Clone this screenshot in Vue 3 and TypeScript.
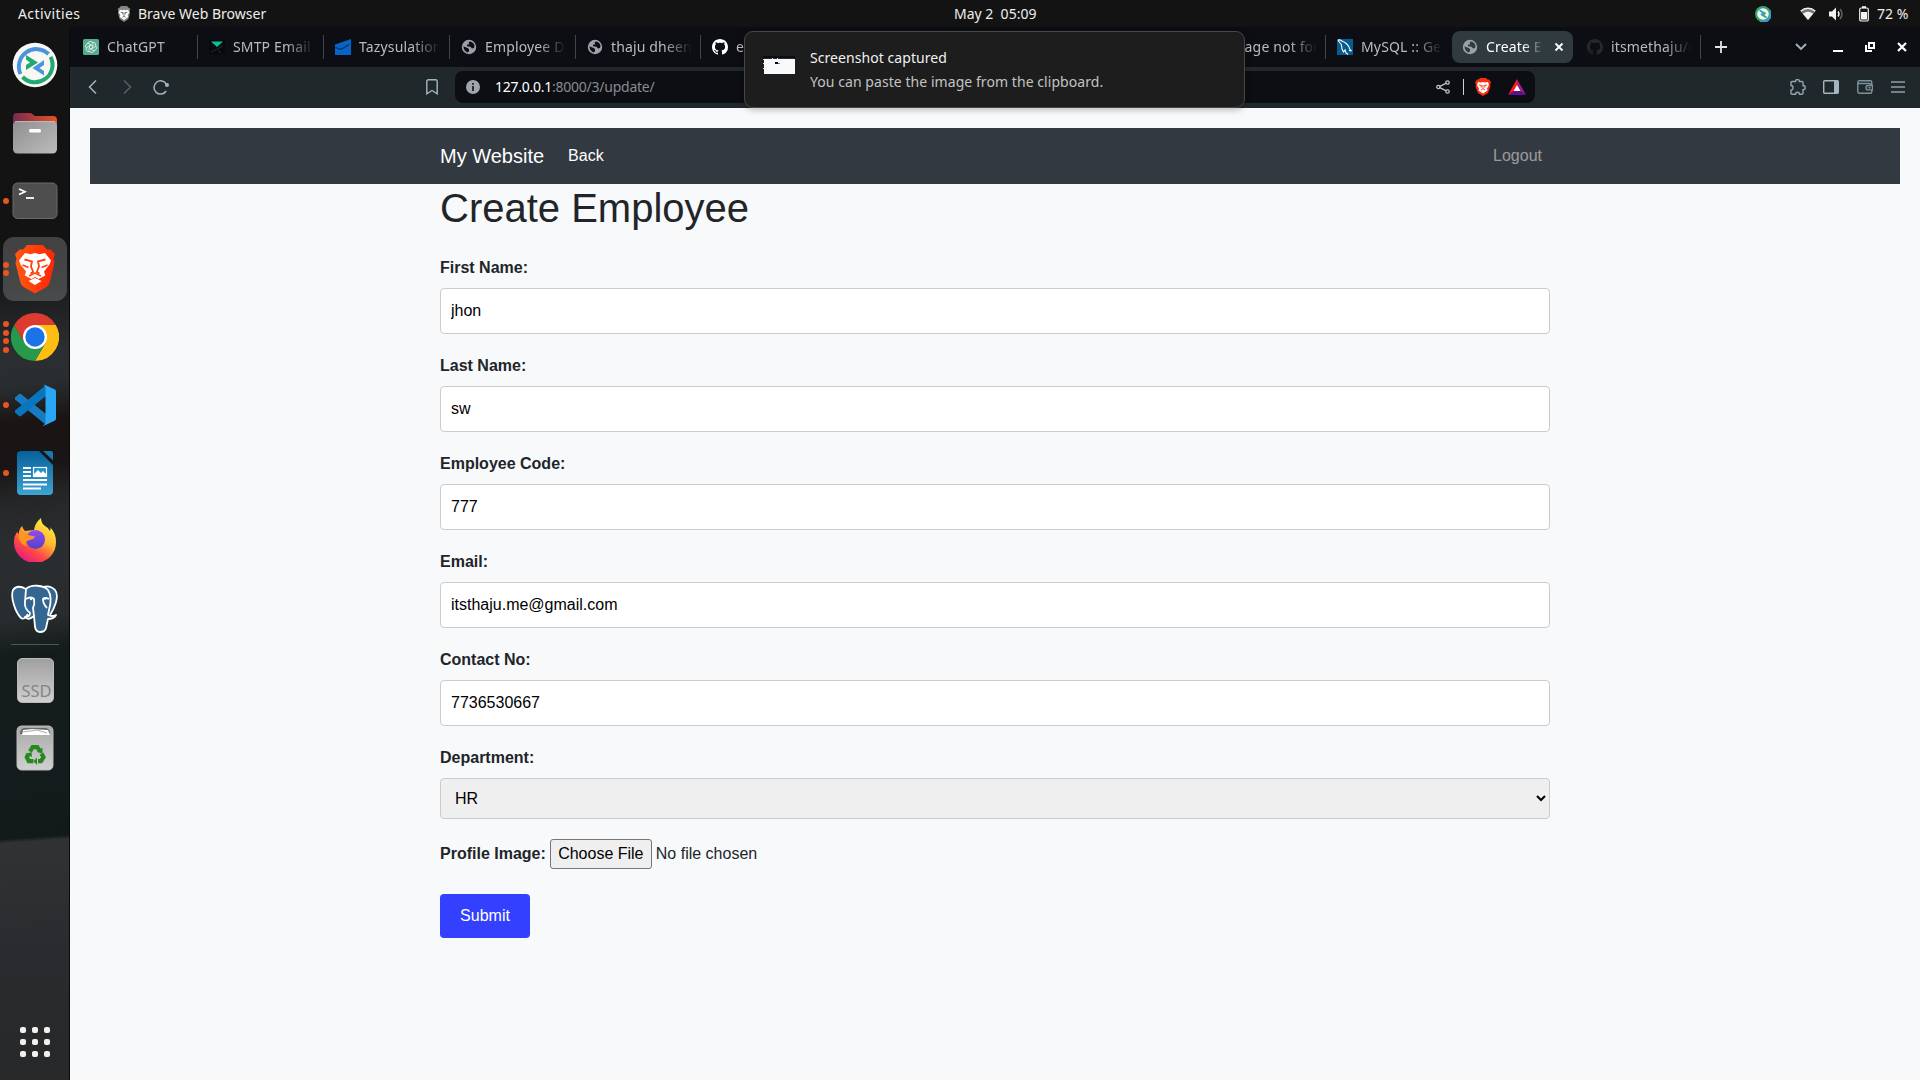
<script setup lang="ts">
import { ref } from 'vue'

interface Tab {
  icon: string
  title: string
  active?: boolean
  divider?: boolean
  wide?: boolean
}

interface Field {
  id: string
  label: string
  value: string
}

const tabs: Tab[] = [
  { icon: 'gpt', title: 'ChatGPT', divider: true, wide: true },
  { icon: 'smtp', title: 'SMTP Email', divider: true, wide: true },
  { icon: 'tazy', title: 'Tazysulation', divider: true, wide: true },
  { icon: 'globe', title: 'Employee D', divider: true, wide: true },
  { icon: 'globe', title: 'thaju dheen', divider: true },
  { icon: 'github', title: 'e', divider: true },
  { icon: '', title: '' },
  { icon: '', title: '' },
  { icon: '', title: '' },
  { icon: '', title: 'Page not fou', divider: true },
  { icon: 'mysql', title: 'MySQL :: Ge', wide: true },
  { icon: 'globe', title: 'Create E', active: true },
  { icon: 'githubdim', title: 'itsmethaju/d', divider: true },
]

const fields = ref<Field[]>([
  { id: 'first', label: 'First Name:', value: 'jhon' },
  { id: 'last', label: 'Last Name:', value: 'sw' },
  { id: 'code', label: 'Employee Code:', value: '777' },
  { id: 'email', label: 'Email:', value: 'itsthaju.me@gmail.com' },
  { id: 'contact', label: 'Contact No:', value: '7736530667' },
])

const dock: { name: string; dots: number; active?: boolean }[] = [
  { name: 'remote', dots: 0 },
  { name: 'files', dots: 0 },
  { name: 'terminal', dots: 1 },
  { name: 'brave', dots: 2, active: true },
  { name: 'chrome', dots: 4 },
  { name: 'code', dots: 1 },
  { name: 'writer', dots: 1 },
  { name: 'firefox', dots: 0 },
  { name: 'postgres', dots: 0 },
]

const petals = [0, 60, 120, 180, 240, 300]
const githubPath =
  'M8 0C3.58 0 0 3.58 0 8c0 3.54 2.29 6.53 5.47 7.59.4.07.55-.17.55-.38 0-.19-.01-.82-.01-1.49-2.01.37-2.53-.49-2.69-.94-.09-.23-.48-.94-.82-1.13-.28-.15-.68-.52-.01-.53.63-.01 1.08.58 1.23.82.72 1.21 1.87.87 2.33.66.07-.52.28-.87.51-1.07-1.78-.2-3.64-.89-3.64-3.95 0-.87.31-1.59.82-2.15-.08-.2-.36-1.02.08-2.12 0 0 .67-.21 2.2.82.64-.18 1.32-.27 2-.27s1.36.09 2 .27c1.53-1.04 2.2-.82 2.2-.82.44 1.1.16 1.92.08 2.12.51.56.82 1.27.82 2.15 0 3.07-1.87 3.75-3.65 3.95.29.25.54.73.54 1.48 0 1.07-.01 1.93-.01 2.2 0 .21.15.46.55.38A8.01 8.01 0 0 0 16 8c0-4.42-3.58-8-8-8z'
</script>

<template>
  <div class="desktop">
    <header class="topbar">
      <div class="top-left">
        <span class="activities">Activities</span>
        <svg class="top-brave" width="14" height="16" viewBox="0 0 40 48">
          <path d="M11 0h18l5 5 5 3-2 8 1 6-5 17-13 9-13-9L2 22l1-6L1 8l5-3z" fill="#858585" />
          <path d="M8 11l8 2 4-2 4 2 8-2 4 8-5 9 2 5-6 4-7 5-7-5-6-4 2-5-5-9z" fill="#fff" />
          <path d="M10 19l7 1-1 5M30 19l-7 1 1 5M20 20v11l-5 3M20 31l5 3" fill="none" stroke="#777" stroke-width="3" />
        </svg>
        <span class="app-name">Brave Web Browser</span>
      </div>
      <span class="clock">May 2&nbsp; 05:09</span>
      <div class="tray">
        <svg class="tray-remote" width="16" height="16" viewBox="0 0 16 16">
          <circle cx="8" cy="8" r="8" fill="#2fa866" />
          <path d="M15 4.5A8 8 0 0 1 5 15.4" fill="none" stroke="#3b98dc" stroke-width="2" />
          <circle cx="8" cy="8" r="5.8" fill="#f2f6f5" />
          <path d="M4.500 4.200l4 2.500-2.500 2.300" fill="none" stroke="#3b98dc" stroke-width="1.800" />
          <path d="M10.500 6.500L8 9.300l3.500 2.200" fill="none" stroke="#2fa866" stroke-width="1.800" />
        </svg>
        <svg class="wifi" width="16" height="14" viewBox="0 0 16 14">
          <path d="M.6 4.4a10.8 10.8 0 0 1 14.8 0L8 13z" fill="#777" />
          <path d="M.7 4.2a10.8 10.8 0 0 1 14.6 0" fill="none" stroke="#f2f2f2" stroke-width="1.5" />
          <path d="M2.9 6.8a7.6 7.6 0 0 1 10.2 0L8 13z" fill="#f2f2f2" />
        </svg>
        <svg class="sound" width="16" height="16" viewBox="0 0 16 16">
          <path d="M1 5.5h3L8 1.5v13l-4-4H1z" fill="#f2f2f2" />
          <path d="M10 5.5q2 2.5 0 5" fill="none" stroke="#f2f2f2" stroke-width="1.4" />
          <path d="M12 3q4 5 0 10" fill="none" stroke="#666" stroke-width="1.4" />
        </svg>
        <svg class="battery" width="10" height="16" viewBox="0 0 10 16">
          <path d="M3 1.2h4" stroke="#f2f2f2" stroke-width="2" />
          <rect x=".7" y="2" width="8.6" height="13" rx="1.6" fill="none" stroke="#f2f2f2" stroke-width="1.2" />
          <rect x="2" y="6" width="6" height="7.5" fill="#f2f2f2" />
        </svg>
        <span class="percent">72 %</span>
      </div>
    </header>

    <div class="workspace">
      <aside class="dock">
        <div v-for="item in dock" :key="item.name" class="slot" :class="{ on: item.active }">
          <div class="dots"><i v-for="n in item.dots" :key="n"></i></div>

          <svg v-if="item.name === 'remote'" width="46" height="46" viewBox="0 0 46 46">
            <circle cx="23" cy="23" r="22.3" fill="#f8f7f3" />
            <path d="M8.500 32A17.500 17.500 0 0 1 36.500 12" fill="none" stroke="#4a94dd" stroke-width="4" />
            <path d="M38.600 14.800A17.500 17.500 0 0 1 10.500 35" fill="none" stroke="#20a971" stroke-width="4" />
            <path d="M14 13l12 7.500L14 28v-5l4-2.500-4-3z" fill="#20a971" />
            <path d="M32 18v5l-4.500 3 4.500 3v4.500L20.500 26z" fill="#4a94dd" />
          </svg>

          <svg v-else-if="item.name === 'files'" width="46" height="44" viewBox="0 0 46 44">
            <defs>
              <linearGradient id="fb"><stop offset="0" stop-color="#772953" /><stop offset="1" stop-color="#e95420" /></linearGradient>
              <linearGradient id="ff" x2="1" y2="1"><stop offset="0" stop-color="#8e8e8e" /><stop offset="1" stop-color="#bdbdbd" /></linearGradient>
            </defs>
            <path d="M1 22V6q0-4 4-4h13q2 0 3.500 2l1.500 1h18q4 0 4 4v13z" fill="url(#fb)" />
            <rect x="1" y="10" width="44" height="32.500" rx="4.500" fill="url(#ff)" />
            <path d="M3 10.600h40" stroke="#c3c3c3" stroke-width=".8" />
            <rect x="17" y="18" width="12" height="3.600" rx="1.500" fill="#fff" />
          </svg>

          <svg v-else-if="item.name === 'terminal'" width="46" height="38" viewBox="0 0 46 38">
            <rect x="1" y="1" width="44" height="35.500" rx="4.500" fill="#4e4e4e" stroke="#6a6a6a" stroke-width="1" />
            <path d="M7 7l6 2.800L7 12.600" fill="none" stroke="#fff" stroke-width="1.700" />
            <path d="M14 16h8" stroke="#fff" stroke-width="1.800" />
          </svg>

          <svg v-else-if="item.name === 'brave'" width="42" height="50" viewBox="0 0 42 50">
            <defs><linearGradient id="bv"><stop offset="0" stop-color="#ff5a10" /><stop offset="1" stop-color="#ff2305" /></linearGradient></defs>
            <path d="M13 1h16l4 4.500h3.500L41 10l-1.500 4.500L40.500 19 35.500 39q-.8 2.500-3 4L21 49.500 9.500 43q-2.200-1.500-3-4L1.500 19l1-4.500L1 10l4.500-4.500H9z" fill="url(#bv)" />
            <path d="M11 9l5.500 1.200L21 9l4.500 1.200L31 9l6 7.500-1.500 4-5.500 7 1.200 4-6.700 3.500L21 33l-3.500 2-6.700-3.500 1.200-4-5.500-7L5 16.500z" fill="#fff" />
            <path d="M10.500 15.500l7.500 1.800-1 5.200 2.200 5.500-2.700 1.500M31.500 15.500L24 17.300l1 5.200-2.200 5.500 2.700 1.500" fill="none" stroke="#ff3e0c" stroke-width="1.800" />
            <path d="M8.500 21l6 2.500M33.500 21l-6 2.500M15 32l6-3 6 3" fill="none" stroke="#ff3e0c" stroke-width="1.500" />
            <path d="M14.500 37l6.500-3 6.500 3L21 41z" fill="#fff" />
          </svg>

          <svg v-else-if="item.name === 'chrome'" width="48" height="48" viewBox="0 0 48 48">
            <path d="M24 12h20.800A24 24 0 0 1 24 48l10.400-18z" fill="#fdbd12" />
            <path d="M13.600 30L3.200 12A24 24 0 0 0 24 48l10.400-18z" fill="#27994a" />
            <path d="M3.200 12L13.600 30 24 12h20.800A24 24 0 0 0 3.200 12z" fill="#dc3b30" />
            <circle cx="24" cy="24" r="12" fill="#fff" /><circle cx="24" cy="24" r="9.700" fill="#1b73e8" />
          </svg>

          <svg v-else-if="item.name === 'code'" width="42" height="42" viewBox="0 0 42 42">
            <path d="M1 13.500l4-3.500q1-.5 2 0l25 20v11L1 15.500z" fill="#167bc0" />
            <path d="M1 28.500l4 3.500q1 .5 2 0l25-20V1L1 26.500z" fill="#0876be" />
            <path d="M30.500.8L41 5.500q1 .5 1 2v27q0 1.500-1 2l-10.500 5q-1 .3-2-.5 2.500.5 3-2.500V3.500q-.5-3-3-2.300 1-.8 2-.4z" fill="#29a7f2" />
          </svg>

          <svg v-else-if="item.name === 'writer'" width="38" height="46" viewBox="0 0 38 46">
            <defs><linearGradient id="wr" x2="0" y2="1"><stop offset="0" stop-color="#07609a" /><stop offset="1" stop-color="#3ea4d2" /></linearGradient></defs>
            <path d="M5 1h18l14 14v26q0 4-4 4H5q-4 0-4-4V5q0-4 4-4z" fill="url(#wr)" />
            <path d="M27 1h8q2 0 2 2v7.500z" fill="#1679ad" />
            <path d="M7 18h8M7 22h8M7 26h8M7 30h24M7 34.500h24M7 38.500h18" stroke="#fff" stroke-width="2" />
            <rect x="17.500" y="17.500" width="13" height="9" fill="#1f91cc" stroke="#fff" stroke-width="1.200" />
            <path d="M18 26v-2l4-4 3 3 2-2 3 3v2z" fill="#fff" />
          </svg>

          <svg v-else-if="item.name === 'firefox'" class="firefox" width="44" height="44" viewBox="0 0 44 44">
            <defs>
              <linearGradient id="fx" x1=".85" y1=".1" x2=".3" y2="1"><stop offset="0" stop-color="#fff044" /><stop offset=".4" stop-color="#ffb52e" /><stop offset=".7" stop-color="#ff4a42" /><stop offset="1" stop-color="#e51b82" /></linearGradient>
              <linearGradient id="fp" x2="0" y2="1"><stop offset="0" stop-color="#9548f3" /><stop offset="1" stop-color="#5144c8" /></linearGradient>
            </defs>
            <path d="M9 8q1 3 3 5l9-1q1-7 7-12 0 5 4 8 4 2 5 5 1-2 0-4 6 6 6 15A21 20.500 0 0 1 1 25q-.5-6 3-11 1 1 2 2 0-5 3-8z" fill="url(#fx)" />
            <circle cx="22.500" cy="21.500" r="9.500" fill="url(#fp)" />
            <path d="M6 13q5 0 9 4l7 1.500q-1 3-5 3.200l-4 2q0 3 1 5-6-2-8-8z" fill="#ff9420" />
          </svg>

          <svg v-else width="48" height="50" viewBox="0 0 48 50">
            <g fill="#336791" stroke="#fff" stroke-width="1.800" stroke-linejoin="round">
              <path d="M15 5Q6 0 2 6c-3 8 3 23 8 28 3 2 5-1 7-4" />
              <path d="M29 4q9-4 15 2c5 6-1 19-5 25" />
              <path d="M15 5c5-5 18-4 22 1 4 6 3 13 1 20l-1 5q4 2 8 0-2 4-8 4l-2 9q-1 4-6 4-4 0-5-5l-1-11q-6 5-9 1 5 0 5-4-6-5-5-11z" />
              <path d="M15 15q5-3 8 0 1 5-1 9l1 8M38 15q-4-2-6 0 0 5 4 9" fill="none" />
            </g>
            <circle cx="20" cy="15" r="1.200" fill="#fff" /><circle cx="34" cy="14.500" r="1.200" fill="#fff" />
          </svg>
        </div>

        <div class="dock-line"></div>

        <div class="slot"><div class="ssd">SSD</div></div>
        <div class="slot">
          <svg width="38" height="46" viewBox="0 0 38 46">
            <defs><linearGradient id="tr" x2="0" y2="1"><stop offset="0" stop-color="#a9a9a9" /><stop offset="1" stop-color="#d0d0d0" /></linearGradient></defs>
            <rect x="1" y="1" width="36" height="44" rx="4.500" fill="url(#tr)" stroke="#bbb" />
            <path d="M4 9q0-5 4-6h22q4 1 4 6z" fill="#666" />
            <path d="M6 10l1-5 9-1 16 1 2 5z" fill="#fff" />
            <path d="M7 7l14-2 10 3" fill="none" stroke="#aaa" />
            <g fill="none" stroke="#26891f" stroke-width="4.200">
              <path d="M14 26.500l2.700-4.300h4.600l2.500 4" /><path d="M25.500 28.500l2 3.700-2.500 4h-3" /><path d="M17.500 36.200h-4.700l-2-4 1.800-3.500" />
            </g>
            <path d="M26.500 22.500v6l-5.500-1.500zM21 32.500v7.500l-3.500-3.800zM9.500 29l6-2 .5 5z" fill="#26891f" />
          </svg>
        </div>
        <div class="slot apps">
          <div class="app-grid"><i v-for="n in 9" :key="n"></i></div>
        </div>
      </aside>

      <section class="browser">
        <div class="tabstrip">
          <div v-for="(tab, i) in tabs" :key="i" class="tab" :class="{ active: tab.active, divider: tab.divider, wide: tab.wide }">
            <span class="fav">
              <svg v-if="tab.icon === 'gpt'" width="16" height="16" viewBox="0 0 16 16">
                <rect width="16" height="16" rx="1.500" fill="#57aa8e" />
                <g fill="none" stroke="#e6f5f0" stroke-width=".8">
                  <path v-for="r in petals" :key="r" d="M8 6.200L10 7.400V4.800Q9.500 2.300 7 2.400 5 2.800 4.700 5" :transform="`rotate(${r} 8 8)`" />
                </g>
              </svg>
              <svg v-else-if="tab.icon === 'smtp'" width="16" height="16" viewBox="0 0 16 16">
                <rect y="1" width="16" height="14" rx="1" fill="#08090b" />
                <path d="M2 2.500h12L8 8z" fill="#00c49a" />
                <path d="M2 13l12-6M12 14l-3-3" stroke="#292c31" stroke-width="1" />
              </svg>
              <svg v-else-if="tab.icon === 'tazy'" width="16" height="16" viewBox="0 0 16 16">
                <path d="M0 5.500L16 0v16H0z" fill="#0763c5" /><path d="M.5 8.500L6 10.500l8-5" fill="none" stroke="#0a2a52" stroke-width="1.100" />
              </svg>
              <svg v-else-if="tab.icon === 'globe'" width="16" height="16" viewBox="0 0 16 16">
                <circle cx="8" cy="8" r="7.200" fill="#9da2aa" />
                <path d="M8.500 2.500L7.500 4 8.500 5.500H6v1.800l3.500.5L11 9.500l2-.5q.7-1.500.3-3.200A5.600 5.600 0 0 0 8.500 2.500zM2.400 7.300L6.500 9l1.500 1v2l-1 1.500Q3 12.700 2.400 7.300z" :fill="tab.active ? '#2f3b3f' : '#0d0e13'" />
              </svg>
              <svg v-else-if="tab.icon === 'github' || tab.icon === 'githubdim'" width="16" height="16" viewBox="0 0 16 16">
                <path :d="githubPath" :fill="tab.icon === 'github' ? '#fff' : '#24292e'" />
              </svg>
              <svg v-else-if="tab.icon === 'mysql'" width="16" height="16" viewBox="0 0 16 16">
                <rect width="16" height="16" fill="#065b8f" />
                <path d="M1 1.500Q2 0 5 2q5 2 7 6 0 2 2.500 4L12 11.500M1 1.500L4 5q1 2 1 5l1.500 3L8 11l1 3 2 1.500" fill="none" stroke="#fff" stroke-width="1.100" />
              </svg>
            </span>
            <span class="tab-title">{{ tab.title }}</span>
            <svg v-if="tab.active" class="tab-close" width="10" height="10" viewBox="0 0 10 10"><path d="M1.500 1.500l7 7M8.500 1.500l-7 7" stroke="#fff" stroke-width="1.800" /></svg>
          </div>
          <svg class="plus" width="12" height="12" viewBox="0 0 12 12"><path d="M6 0v12M0 6h12" stroke="#e0e2e5" stroke-width="1.800" /></svg>
          <div class="window-buttons">
            <svg width="12" height="10" viewBox="0 0 12 10"><path d="M1 2l5 5 5-5" fill="none" stroke="#a3b6c0" stroke-width="1.800" /></svg>
            <svg width="10" height="10" viewBox="0 0 10 10"><path d="M0 9h10" stroke="#fff" stroke-width="2" /></svg>
            <svg width="10" height="10" viewBox="0 0 10 10"><path d="M4 1h5v5H4zM1 3v6h6" fill="none" stroke="#fff" stroke-width="2" /></svg>
            <svg width="10" height="10" viewBox="0 0 10 10"><path d="M1 1l8 8M9 1L1 9" stroke="#fff" stroke-width="2.200" /></svg>
          </div>
        </div>

        <div class="toolbar">
          <div class="nav-buttons">
            <svg width="10" height="16" viewBox="0 0 10 16"><path d="M8 1.500L1.500 8 8 14.500" fill="none" stroke="#a3b6c0" stroke-width="1.500" /></svg>
            <svg width="10" height="16" viewBox="0 0 10 16"><path d="M2 1.500L8.500 8 2 14.500" fill="none" stroke="#566168" stroke-width="1.500" /></svg>
            <svg width="16" height="16" viewBox="0 0 16 16"><path d="M13.500 5.500A6.600 6.600 0 1 0 13.200 12" fill="none" stroke="#a3b6c0" stroke-width="1.500" /><circle cx="14" cy="6" r="2" fill="#a3b6c0" /></svg>
          </div>
          <svg class="bookmark" width="12" height="16" viewBox="0 0 12 16"><path d="M.8 14.800V2.500Q.8.800 2.500.800h7q1.700 0 1.700 1.700v12.300L6 11.500z" fill="none" stroke="#a3b6c0" stroke-width="1.400" /></svg>
          <div class="address">
            <svg class="info" width="14" height="14" viewBox="0 0 14 14"><circle cx="7" cy="7" r="7" fill="#a0a4ac" /><path d="M7 6v5M7 3v1.800" stroke="#15161b" stroke-width="1.700" /></svg>
            <span class="url"><b>127.0.0.1</b>:8000/3/update/</span>
            <div class="address-icons">
              <svg width="14" height="14" viewBox="0 0 14 14"><g fill="none" stroke="#c0c3c7" stroke-width="1.300"><circle cx="2.300" cy="7" r="1.600" /><circle cx="11.500" cy="2.500" r="1.700" /><circle cx="11.500" cy="11.500" r="1.700" /><path d="M3.800 6.300l6-3M3.800 7.700l6 3" /></g></svg>
              <i class="address-line"></i>
              <svg width="16" height="18" viewBox="0 0 16 18">
                <path d="M5 0h6l1.500 1.500L14 1.500l2 3-1 2 .5 2-2.500 6.500-5 3-5-3L.5 8.500l.5-2-1-2 2-3 1.500 0z" fill="#fb2c0b" />
                <path d="M3 4l3 .5 2-.5 2 .5 3-.5 1 3-2 3.500.5 2-4.500 3-4.500-3 .5-2L2 7z" fill="#fff" />
                <path d="M4 7l2.500.5-.5 2M12 7l-2.500.5.5 2M8 7v3.500l-2 1.500M8 10.500l2 1.500" fill="none" stroke="#fb2c0b" stroke-width=".9" />
              </svg>
              <svg class="bat" width="18" height="16" viewBox="0 0 18 16"><path d="M9 0L0 16 9 10z" fill="#ff1a12" /><path d="M9 0l9 16-9-6z" fill="#9e1f82" /><path d="M0 16h18l-9-6z" fill="#5b1294" /><path d="M9 6l3.500 6h-7z" fill="#fff" /></svg>
            </div>
          </div>
          <div class="extension-icons">
            <svg width="16" height="16" viewBox="0 0 16 16"><path d="M1 3.500Q1 2.500 2 2.500h3.500q0-2 2-2t2 2H12q1 0 1 1V6.500q2.200.2 2.200 2.200T13 10.700V14q0 1.200-1 1.200H9.500q0-2-2-2t-2 2H2q-1 0-1-1V11q2 0 2-2.200T1 6.500z" fill="none" stroke="#8fa5b0" stroke-width="1.400" /></svg>
            <svg width="16" height="14" viewBox="0 0 16 14"><rect x=".7" y=".7" width="14.600" height="12.600" rx="1" fill="none" stroke="#a3b6c0" stroke-width="1.400" /><path d="M11 1h4v12h-4z" fill="#a3b6c0" /></svg>
            <svg width="16" height="14" viewBox="0 0 16 14"><g fill="none" stroke="#7d929d" stroke-width="1.400"><rect x=".8" y=".7" width="14" height="12.600" rx="1.500" /><path d="M1 3.500h11q2.500 0 2.500 2" /><path d="M15.500 5.500h-4.300Q9 5.500 9 7.700t2.200 2.200h4.300zM11.500 7.700h2" fill="#21282b" /></g></svg>
            <svg width="14" height="12" viewBox="0 0 14 12"><path d="M0 1h14M0 6h14M0 11h14" stroke="#8fa0a8" stroke-width="1.400" /></svg>
          </div>
        </div>

        <main class="page">
          <nav class="navbar">
            <div class="container nav-inner">
              <a class="brand">My Website</a>
              <a class="back">Back</a>
              <a class="logout">Logout</a>
            </div>
          </nav>
          <div class="container">
            <h1>Create Employee</h1>
            <form @submit.prevent>
              <div v-for="field in fields" :key="field.id" class="group">
                <label :for="field.id">{{ field.label }}</label>
                <input :id="field.id" v-model="field.value" class="control" type="text" spellcheck="false" />
              </div>
              <div class="group">
                <label for="department">Department:</label>
                <select id="department" class="control"><option>HR</option></select>
              </div>
              <div class="file-row">
                <label for="image">Profile Image:</label>
                <input id="image" type="file" />
              </div>
              <button class="submit" type="submit">Submit</button>
            </form>
          </div>
        </main>
      </section>
    </div>

    <div class="toast">
      <svg class="thumb" width="32" height="18" viewBox="0 0 32 18" shape-rendering="crispEdges">
        <path d="M0 0h32v3H0z" fill="#0b0d12" /><path d="M1 3h31v15H1z" fill="#f8f9fb" />
        <path d="M1 2h30" stroke="#252a31" /><path d="M9 2h1M14 2h1M0 3h1M0 7h1M0 12h1" stroke="#ddd" /><path d="M12 6h3v2h-3z" fill="#0b0d12" /><path d="M15 7h2" stroke="#6b6cf8" />
      </svg>
      <div class="toast-text">
        <span class="toast-title">Screenshot captured</span>
        <span class="toast-body">You can paste the image from the clipboard.</span>
      </div>
    </div>
  </div>
</template>

<style>
html,
body {
  margin: 0;
  overflow: hidden;
}
</style>

<style scoped>
* {
  box-sizing: border-box;
}
svg {
  display: block;
  flex: none;
}
.desktop {
  position: relative;
  width: 1920px;
  height: 1080px;
  display: flex;
  flex-direction: column;
  overflow: hidden;
  background: #131313;
  font-family: 'Noto Sans', 'Open Sans', sans-serif;
  font-size: 14px;
}
.topbar {
  height: 27px;
  flex: none;
  display: grid;
  grid-template-columns: 936px 82px 1fr;
  align-items: center;
  padding: 0 12px 0 18px;
  background: #131313;
  color: #eeeeec;
  white-space: pre;
}
.top-left {
  display: flex;
  align-items: center;
}
.activities {
  width: 99px;
  letter-spacing: 0.4px;
}
.top-brave {
  margin-right: 7px;
}
.tray {
  display: flex;
  align-items: center;
  justify-content: flex-end;
}
.tray-remote {
  margin-right: 29px;
}
.wifi {
  margin-right: 12px;
}
.sound {
  margin-right: 15px;
}
.battery {
  margin-right: 8px;
}
.percent {
  width: 31px;
}

.workspace {
  flex: 1;
  min-height: 0;
  display: flex;
}
.dock {
  width: 70px;
  flex: none;
  display: flex;
  flex-direction: column;
  padding: 4px 0;
  border-right: 1px solid #0b0b0b;
  background:
    linear-gradient(176deg, transparent 76.8%, #303234 77.2%, #292b2e 88%, #262829 100%),
    linear-gradient(173deg, #131313 0, #131313 21%, #191a1b 25%, #2b2f32 31%, #292d30 34%, #1a1414 37.500%, #191415 41.500%, #242526 44.500%, #2b2e30 49%, #282c2e 56%, #141b1b 59.500%, #141c1d 70%, #111919 78%);
}
.slot {
  position: relative;
  height: 68px;
  flex: none;
  display: flex;
  align-items: center;
  justify-content: center;
  padding-left: 1px;
}
.slot > svg {
  position: relative;
}
.slot > .firefox {
  margin-top: -2px;
}
.slot.on::before {
  content: '';
  position: absolute;
  inset: 2px 2px 2px 3px;
  border-radius: 11px;
  background: rgba(255, 255, 255, 0.2);
}
.dots {
  position: absolute;
  left: 3px;
  top: 0;
  bottom: 0;
  display: flex;
  flex-direction: column;
  justify-content: center;
  gap: 2.600px;
}
.dots i {
  width: 6px;
  height: 6px;
  border-radius: 50%;
  background: #e95420;
}
.dock-line {
  height: 1px;
  flex: none;
  margin: 1px 10px 1px 11px;
  background: #505455;
}
.ssd {
  width: 37px;
  height: 45px;
  border: 1px solid #bbb;
  border-radius: 5px;
  background: linear-gradient(#a0a0a0, #cfcfcf);
  color: #858585;
  font-size: 16.500px;
  line-height: 20px;
  padding: 22px 0 0 4px;
}
.slot.apps {
  margin-top: auto;
}
.app-grid {
  display: grid;
  grid-template-columns: repeat(3, 6px);
  gap: 6px;
}
.app-grid i {
  height: 6px;
  border-radius: 2px;
  background: #f2f1ef;
}

.browser {
  flex: 1;
  min-width: 0;
  display: flex;
  flex-direction: column;
}
.tabstrip {
  height: 40px;
  flex: none;
  display: flex;
  align-items: center;
  padding: 0 13px 0 2px;
  background: #0d0e13;
  color: #b9bbc0;
}
.tab {
  width: 125px;
  height: 32px;
  flex: none;
  display: flex;
  align-items: center;
  padding-left: 11px;
  position: relative;
}
.tab.wide {
  width: 126px;
}
.tab.divider::after {
  content: '';
  position: absolute;
  right: 0;
  top: 4px;
  width: 1px;
  height: 24px;
  background: #43454a;
}
.tab.active {
  width: 121px;
  margin-right: 3px;
  padding-left: 10px;
  border-radius: 8px;
  background: #2f3b3f;
  color: #fff;
}
.fav {
  width: 16px;
  height: 16px;
  flex: none;
  margin-right: 8px;
}
.tab-title {
  width: 81px;
  padding-bottom: 2px;
  overflow: hidden;
  white-space: nowrap;
  letter-spacing: 0.15px;
  mask-image: linear-gradient(90deg, #000 66%, transparent 100%);
}
.tab.active .tab-title {
  width: 57px;
}
.tab-close {
  margin-left: 11px;
}
.plus {
  margin-left: 14px;
}
.window-buttons {
  display: flex;
  align-items: center;
  gap: 22px;
  margin-left: auto;
}
.window-buttons svg:first-child {
  margin-right: 4px;
}
.window-buttons svg:nth-child(2) {
  margin-right: 0;
}

.toolbar {
  height: 41px;
  flex: none;
  display: flex;
  align-items: center;
  padding: 0 15px 1px 18px;
  background: #21282b;
}
.nav-buttons {
  display: flex;
  gap: 24px;
  width: 338px;
}
.nav-buttons svg:last-child {
  margin-left: -3px;
}
.address {
  width: 1080px;
  height: 32px;
  margin-left: 17px;
  display: flex;
  align-items: center;
  padding: 0 9px 0 11px;
  border-radius: 8px;
  background: #0d0e13;
}
.url {
  margin-left: 15px;
  padding-bottom: 1px;
  color: #888b91;
  letter-spacing: -0.25px;
}
.url b {
  font-weight: 400;
  color: #fff;
}
.address-icons {
  display: flex;
  align-items: center;
  margin-left: auto;
}
.address-line {
  width: 1px;
  height: 16px;
  margin: 0 11px 0 13px;
  background: #d0d2d4;
}
.bat {
  margin-left: 17px;
}
.extension-icons {
  display: flex;
  align-items: center;
  gap: 18px;
  margin-left: auto;
}
.extension-icons svg:first-child {
  margin-right: -1px;
}

.page {
  flex: 1;
  padding: 20px;
  background: #f8f9fb;
  color: #212529;
  font-family: 'Liberation Sans', Arial, sans-serif;
  font-size: 16px;
  line-height: 24px;
}
.navbar {
  height: 56px;
  display: flex;
  background: #333941;
}
.container {
  width: 1110px;
  margin: 0 auto;
}
.nav-inner {
  display: flex;
  align-items: center;
  color: #fff;
}
.brand {
  font-size: 20px;
  line-height: 30px;
  margin-right: 24px;
}
.logout {
  margin-left: auto;
  padding-right: 8px;
  color: rgba(255, 255, 255, 0.5);
}
h1 {
  margin: 0 0 24px;
  font-size: 40px;
  font-weight: 400;
  line-height: 48px;
}
.group {
  margin-bottom: 20px;
}
label {
  font-weight: 700;
}
.group label {
  display: block;
  margin-bottom: 8px;
}
.control {
  display: block;
  width: 100%;
  height: 46px;
  margin: 0;
  padding: 10px;
  border: 1px solid #ccc;
  border-radius: 4px;
  font: inherit;
  color: #000;
  background: #fff;
}
select.control {
  height: 41px;
  background: #efefef;
}
.file-row {
  display: flex;
  align-items: center;
  gap: 4px;
  height: 30px;
  margin-bottom: 25px;
}
.file-row input {
  height: 30px;
  font: inherit;
  color: inherit;
}
.file-row input::file-selector-button {
  box-sizing: border-box;
  width: 102px;
  height: 30px;
  margin: 0 4px 0 0;
  padding: 0;
  border: 1px solid #767676;
  border-radius: 3px;
  background: #efefef;
  color: #000;
  font: inherit;
}
.submit {
  display: block;
  width: 90px;
  height: 44px;
  padding: 0;
  border: 0;
  border-radius: 4px;
  background: #3340ff;
  color: #fff;
  font: inherit;
}

.toast {
  position: absolute;
  left: 744px;
  top: 31px;
  width: 501px;
  height: 77px;
  display: flex;
  align-items: center;
  padding: 0 18px;
  border: 1px solid #474747;
  border-radius: 9px;
  background: #1d1d1d;
  box-shadow: 0 2px 6px rgba(0, 0, 0, 0.25);
}
.thumb {
  margin-top: -9px;
}
.toast-text {
  display: flex;
  flex-direction: column;
  margin: 1px 0 0 15px;
  line-height: 24px;
  white-space: nowrap;
  letter-spacing: 0.06px;
}
.toast-title {
  color: #f0f0f0;
}
.toast-body {
  color: #c3c3c3;
}
</style>
